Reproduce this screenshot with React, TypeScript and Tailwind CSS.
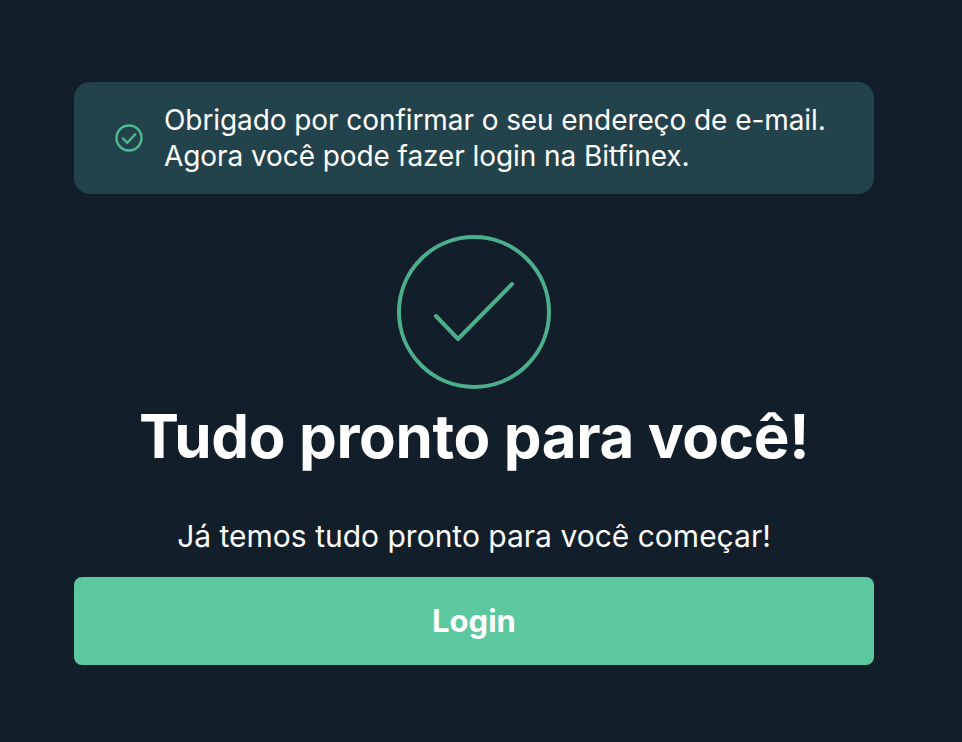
export default function App() {
  return (
    <div className="min-h-[742px] bg-[#121e2a] flex justify-center pt-[82px] pr-[14px] font-['Inter',sans-serif] text-white">
      <div className="w-[800px] flex flex-col items-center">
        <div className="w-full h-[112px] rounded-[16px] bg-[#23434c] flex items-center pl-[41px] gap-[21px]">
          <svg width="28" height="28" viewBox="0 0 28 28" fill="none" stroke="#4fb98f" strokeWidth="2.4" strokeLinecap="round" strokeLinejoin="round">
            <circle cx="14" cy="14" r="12.5" />
            <path d="M8 14.5l4.3 4.3 7.9-8.5" />
          </svg>
          <p className="text-[28px] tracking-[-0.08px] leading-[36px]">Obrigado por confirmar o seu endereço de e-mail.<br />Agora você pode fazer login na Bitfinex.</p>
        </div>
        <svg className="mt-[41px]" width="154" height="154" viewBox="0 0 154 154" fill="none" stroke="#4caf8c" strokeWidth="4" strokeLinecap="round" strokeLinejoin="round">
          <circle cx="77" cy="77" r="75" />
          <path d="M39 81l22 23 54-55" />
        </svg>
        <h1 className="mt-[11px] text-[60px] tracking-[-0.36px] leading-[72px] font-bold">Tudo pronto para você!</h1>
        <p className="mt-[44px] text-[30px] leading-[40px]">Já temos tudo pronto para você começar!</p>
        <button className="mt-[21px] w-full h-[88px] rounded-[8px] bg-[#5bc89f] text-[31px] font-bold text-white">Login</button>
      </div>
    </div>
  );
}
